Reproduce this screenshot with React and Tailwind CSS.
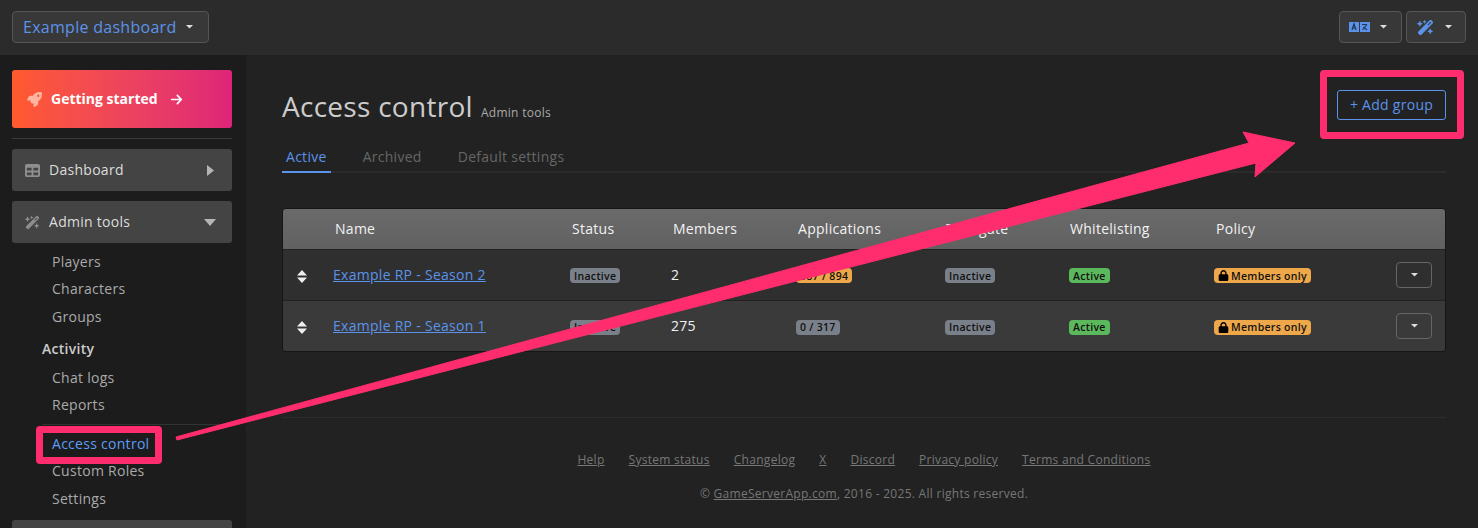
import React from 'react'
import { FaArrowRight, FaRocket, FaWandMagicSparkles, FaLock, FaTable } from 'react-icons/fa6'

const Caret = ({ className = '' }) => (
  <svg className={className} width="7" height="4" viewBox="0 0 7 4" fill="currentColor">
    <path d="M0 0h7L3.5 3.5z" />
  </svg>
)

const Badge = ({ color = 'bg-[#7a808a]', className = '', children }) => (
  <span className={`inline-flex h-[15px] items-center rounded-[4px] px-1 align-middle text-[10.5px] font-semibold leading-none tracking-[0.3px] text-[#111] ${color} ${className}`}>
    {children}
  </span>
)

const Policy = () => (
  <Badge color="bg-[#eea84a]">
    <FaLock className="mr-[2px] h-[11px] w-[11px] text-black" />
    Members only
  </Badge>
)

const SortHandle = () => (
  <svg width="10" height="13" viewBox="0 0 10 13" fill="#eee">
    <path d="M5 0l5 5.5H0zM0 7.5h10L5 13z" />
  </svg>
)

const rows = [
  { name: 'Example RP - Season 2', members: '2', apps: '387 / 894', appsColor: 'bg-[#eea84a]', bg: 'bg-[#2f2f2f]' },
  { name: 'Example RP - Season 1', members: '275', apps: '0 / 317', appsColor: 'bg-[#7a808a]', bg: 'bg-[#3a3a3a]' },
]

const footerLinks = ['Help', 'System status', 'Changelog', 'X', 'Discord', 'Privacy policy', 'Terms and Conditions']

function Sidebar() {
  return (
    <aside className="h-[473px] w-[246px] shrink-0 overflow-hidden bg-[#1c1c1c] pl-3 pr-[14px] pt-[15px]">
      <div className="flex h-[58px] items-center rounded-[3px] bg-gradient-to-r from-[#ff5a2c] to-[#de2478] pl-[15px] text-sm font-bold tracking-normal text-white">
        <FaRocket className="mr-[9px] h-[15px] w-[15px] text-[#ffb5a0]" />
        Getting started
        <FaArrowRight className="ml-3 h-[13px] w-[13px]" />
      </div>
      <div className="mt-[10px] border-t border-[#3a3a3a]" />
      <div className="mt-[10px] flex h-[42px] items-center rounded-[3px] bg-[#444] pl-[13px] pr-[18px] text-sm text-[#ddd]">
        <FaTable className="mr-[9px] h-[15px] w-[15px] text-[#8e8e8e]" />
        Dashboard
        <svg className="ml-auto" width="7" height="11" viewBox="0 0 7 11" fill="#b5b5b5"><path d="M0 0l7 5.5L0 11z" /></svg>
      </div>
      <div className="mt-[10px] flex h-[42px] items-center rounded-[3px] bg-[#444] pl-[13px] pr-4 text-sm text-[#ddd]">
        <FaWandMagicSparkles className="mr-[9px] h-[15px] w-[15px] text-[#8e8e8e]" />
        Admin tools
        <svg className="ml-auto" width="12" height="7" viewBox="0 0 12 7" fill="#b5b5b5"><path d="M0 0h12L6 7z" /></svg>
      </div>
      <nav className="mt-[5px] text-sm leading-[27.4px] text-[#aaa]">
        <div className="pl-10">Players</div>
        <div className="pl-10">Characters</div>
        <div className="pl-10">Groups</div>
        <div className="mt-[5px] pl-[30px] font-semibold text-[#ccc]">Activity</div>
        <div className="mt-[1px] pl-10">Chat logs</div>
        <div className="pl-10">Reports</div>
        <div className="ml-[30px] mt-[6px] border-t border-[#333]" />
        <div className="mt-[4.5px] pl-10 text-[#5b9cf5]">Access control</div>
        <div className="pl-10">Custom Roles</div>
        <div className="pl-10">Settings</div>
      </nav>
      <div className="mt-[8px] h-[42px] rounded-[3px] bg-[#444]" />
    </aside>
  )
}

function AccessTable() {
  return (
    <div className="mt-[35px] overflow-hidden rounded-[4px] border border-[#161616]">
      <table className="w-full table-fixed border-collapse text-left text-sm">
        <colgroup>
          <col className="w-[38px]" />
          <col className="w-[237px]" />
          <col className="w-[101px]" />
          <col className="w-[125px]" />
          <col className="w-[147px]" />
          <col className="w-[125px]" />
          <col className="w-[146px]" />
          <col className="w-[182px]" />
          <col />
        </colgroup>
        <thead>
          <tr className="h-10 bg-gradient-to-b from-[#6a6a6a] to-[#616161] text-[#f2f2f2]">
            <th className="font-normal" />
            <th className="pl-[14px] font-normal">Name</th>
            <th className="pl-[14px] font-normal">Status</th>
            <th className="pl-[14px] font-normal">Members</th>
            <th className="pl-[14px] font-normal">Applications</th>
            <th className="pl-[14px] font-normal">Renegate</th>
            <th className="pl-[14px] font-normal">Whitelisting</th>
            <th className="pl-[14px] font-normal">Policy</th>
            <th />
          </tr>
        </thead>
        <tbody>
          {rows.map(row => (
            <tr key={row.name} className={`h-[51px] border-t border-[#222] ${row.bg}`}>
              <td className="pl-[14px] pt-1"><SortHandle /></td>
              <td className="pl-3"><a className="text-[#5b93ea] underline" href="#">{row.name}</a></td>
              <td className="pl-3"><Badge>Inactive</Badge></td>
              <td className="pl-3 text-[#f2f2f2]">{row.members}</td>
              <td className="pl-3"><Badge color={row.appsColor}>{row.apps}</Badge></td>
              <td className="pl-[14px]"><Badge>Inactive</Badge></td>
              <td className="pl-[13px]"><Badge color="bg-[#5cb85c]">Active</Badge></td>
              <td className="pl-3"><Policy /></td>
              <td className="pr-[13px] text-right">
                <button className="inline-flex h-[26px] w-9 items-center justify-center rounded-[4px] border border-[#666] align-middle text-[#ddd]">
                  <Caret />
                </button>
              </td>
            </tr>
          ))}
        </tbody>
      </table>
    </div>
  )
}

export default function App() {
  return (
    <div className="relative h-[528px] w-[1478px] overflow-hidden bg-[#222] tracking-[0.28px] text-[#ccc]" style={{ fontFamily: '"Open Sans", sans-serif' }}>
      <header className="flex h-[55px] items-center bg-[#2b2b2b] px-3 pb-px">
        <button className="flex h-8 w-[197px] items-center rounded-[4px] border border-[#555] bg-[#383838] pl-[10px] text-base text-[#5b93ea]">
          Example dashboard
          <Caret className="ml-[10px] text-[#ddd]" />
        </button>
        <div className="ml-auto flex gap-[4px]">
          <button className="flex h-8 w-[63px] items-center rounded-[4px] border border-[#555] bg-[#383838] pl-[9px] text-[#ddd]">
            <svg width="21" height="10" viewBox="0 0 21 10">
              <rect width="10" height="10" fill="#5b93ea" />
              <rect x="11" width="10" height="10" fill="#5b93ea" />
              <path d="M3 8l2-6 2 6M3.8 6h2.4" stroke="#23344f" strokeWidth="1.2" fill="none" />
              <path d="M13 2.5h5M18 2.5L13.5 8M14.5 5l3.5 3" stroke="#23344f" strokeWidth="1.1" fill="none" />
            </svg>
            <Caret className="ml-[10px]" />
          </button>
          <button className="flex h-8 w-[60px] items-center rounded-[4px] border border-[#555] bg-[#383838] pl-[10px] text-[#ddd]">
            <FaWandMagicSparkles className="h-[17px] w-[17px] text-[#5b93ea]" />
            <Caret className="ml-[11px]" />
          </button>
        </div>
      </header>

      <div className="flex">
        <Sidebar />
        <main className="min-w-0 flex-1 pl-9 pr-8">
          <div className="flex items-start justify-between pt-[34px]">
            <h1 className="flex items-baseline text-[28px] leading-[34px] text-[#ccc]">
              Access control
              <small className="ml-2 text-xs text-[#aaa]">Admin tools</small>
            </h1>
            <button className="mt-px h-[30px] w-[109px] rounded-[3px] border border-[#5b93ea] text-sm text-[#5b93ea]">+ Add group</button>
          </div>
          <div className="mt-[20px] flex h-[30px] items-start border-b-2 border-[#2b2b2b] text-sm text-[#666]">
            <span className="h-[30px] border-b-2 border-[#5b93ea] px-1 leading-[28px] text-[#5b93ea]">Active</span>
            <span className="ml-8 leading-[28px]">Archived</span>
            <span className="ml-9 leading-[28px]">Default settings</span>
          </div>
          <AccessTable />
          <footer className="mt-[65px] border-t border-[#2e2e2e] pt-[34px] text-center text-xs text-[#777]">
            <div className="flex justify-center gap-6">
              {footerLinks.map(link => <a key={link} href="#" className="underline">{link}</a>)}
            </div>
            <p className="mt-[18px]">© <a href="#" className="underline">GameServerApp.com</a>, 2016 - 2025. All rights reserved.</p>
          </footer>
        </main>
      </div>

      {/* annotation overlays */}
      <div className="absolute left-[36px] top-[426px] h-[38px] w-[126px] rounded-[4px] border-[7px] border-[#ff2d6e]" />
      <div className="absolute left-[1320px] top-[70px] h-[69px] w-[144px] rounded-[4px] border-[7px] border-[#ff2d6e]" />
      <svg className="pointer-events-none absolute left-0 top-0" width="1478" height="528" viewBox="0 0 1478 528">
        <path d="M176 437L1249 143L1243 132L1295 143L1255 177L1256 163L177 440z" fill="#ff2d6e" stroke="#ff2d6e" strokeLinejoin="round" strokeWidth="1" />
      </svg>
    </div>
  )
}
